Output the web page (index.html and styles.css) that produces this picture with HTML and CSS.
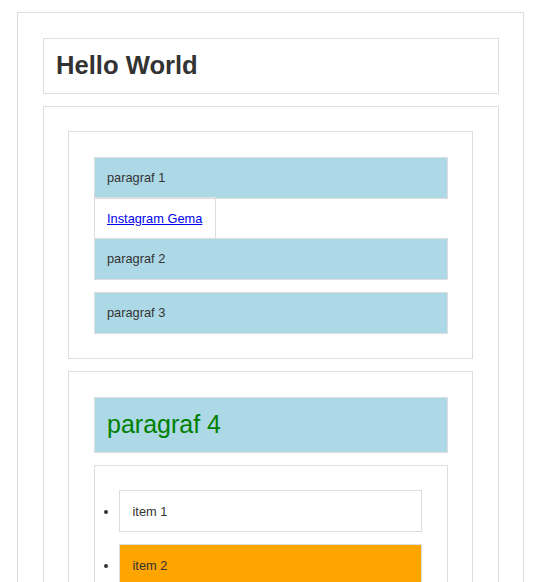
FILE: index.html
```html
<!DOCTYPE html>
<html>
<head>
<meta charset="utf-8">
<title>Hello World</title>
<link rel="stylesheet" href="styles.css">
</head>
<body>
<div class="page box">
  <h1 class="box title">Hello World</h1>
  <div class="box">
    <div class="box">
      <p class="box para">paragraf 1</p>
      <a class="box link" href="#">Instagram Gema</a>
      <p class="box para">paragraf 2</p>
      <p class="box para">paragraf 3</p>
    </div>
    <div class="box">
      <p class="box para big">paragraf 4</p>
      <ul class="box list">
        <li class="box item">item 1</li>
        <li class="box item hl">item 2</li>
        <li class="box item">item 3</li>
      </ul>
    </div>
  </div>
</div>
</body>
</html>
```
FILE: styles.css
```css
html, body {
  margin: 0;
  padding: 0;
  background: #fff;
}
body {
  font-family: "Liberation Sans", Arial, sans-serif;
  font-size: 12.8px;
  color: #333;
}
.box {
  border: 1px solid #ddd;
  padding: 12.5px;
  margin: 12px;
}
.page {
  margin: 12px 0 0 17px;
  width: 507px;
  box-sizing: border-box;
}
.title {
  font-size: 25.6px;
  font-weight: bold;
}
.para {
  background: lightblue;
}
.big {
  font-size: 25px;
  color: green;
}
.link {
  color: #0000ee;
  text-decoration: underline;
}
.list {
  list-style: disc outside;
}
.hl {
  background: orange;
}
```
